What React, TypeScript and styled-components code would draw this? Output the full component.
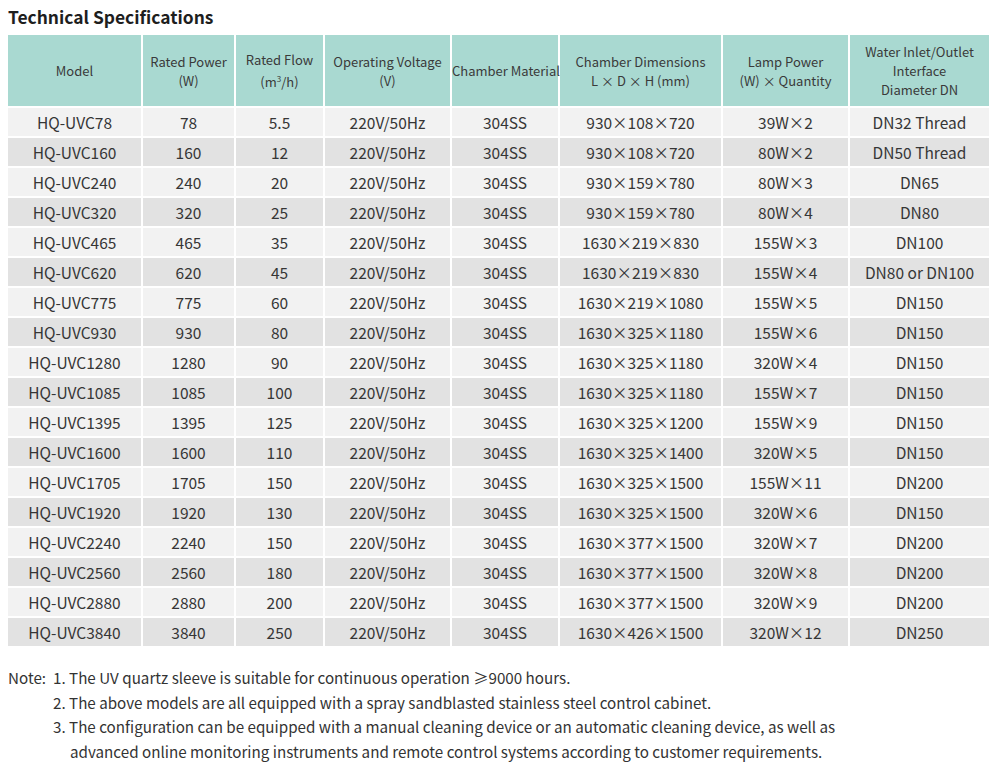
import React from "react";
import styled, { createGlobalStyle } from "styled-components";

const GlobalStyle = createGlobalStyle`
  html, body {
    margin: 0;
    padding: 0;
    background: #ffffff;
  }
  body {
    font-family: "Noto Sans CJK SC", "Noto Sans", sans-serif;
    color: #333333;
  }
`;

const Page = styled.div`
  width: 1000px;
  height: 777px;
  padding: 4px 8px 0 8px;
  box-sizing: border-box;
  overflow: hidden;
`;

const Title = styled.h2`
  margin: 0 0 6px 0;
  font-size: 17.4px;
  line-height: 25px;
  font-weight: 700;
  color: #1e1e1e;
`;

const Table = styled.table`
  width: 981px;
  border-collapse: collapse;
  table-layout: fixed;
  font-size: 15.5px;
  color: #363636;
`;

const HeadCell = styled.th`
  background: #a9d9d1;
  font-size: 13px;
  font-weight: 400;
  line-height: 19px;
  height: 71px;
  padding: 0;
  text-align: center;
  white-space: nowrap;
  border: 2px solid #ffffff;
  border-top: none;
  color: #3a3a3a;
  &:first-child {
    border-left: none;
  }
  &:last-child {
    border-right: none;
  }
`;

const Sup = styled.sup`
  font-size: 8px;
  vertical-align: 5px;
`;

const Row = styled.tr<{ $dark: boolean }>`
  background: ${({ $dark }) => ($dark ? "#e2e2e2" : "#f2f2f2")};
`;

const Cell = styled.td`
  height: 28px;
  padding: 0;
  line-height: 28px;
  text-align: center;
  white-space: nowrap;
  border: 2px solid #ffffff;
  &:first-child {
    border-left: none;
  }
  &:last-child {
    border-right: none;
  }
`;

const Notes = styled.div`
  margin-top: 17px;
  display: grid;
  grid-template-columns: 45px 1fr;
  font-size: 15.2px;
  line-height: 24.5px;
  color: #333333;
`;

const NoteLabel = styled.span`
  grid-row: 1 / span 3;
`;

const NoteItem = styled.p`
  margin: 0;
  padding-left: 17px;
  text-indent: -17px;
`;

const cols = [134, 93, 89, 127, 108, 163, 127, 140];

type Spec = [string, string, string, string, string, string];

const specs: Spec[] = [
  ["HQ-UVC78", "78", "5.5", "930×108×720", "39W×2", "DN32 Thread"],
  ["HQ-UVC160", "160", "12", "930×108×720", "80W×2", "DN50 Thread"],
  ["HQ-UVC240", "240", "20", "930×159×780", "80W×3", "DN65"],
  ["HQ-UVC320", "320", "25", "930×159×780", "80W×4", "DN80"],
  ["HQ-UVC465", "465", "35", "1630×219×830", "155W×3", "DN100"],
  ["HQ-UVC620", "620", "45", "1630×219×830", "155W×4", "DN80 or DN100"],
  ["HQ-UVC775", "775", "60", "1630×219×1080", "155W×5", "DN150"],
  ["HQ-UVC930", "930", "80", "1630×325×1180", "155W×6", "DN150"],
  ["HQ-UVC1280", "1280", "90", "1630×325×1180", "320W×4", "DN150"],
  ["HQ-UVC1085", "1085", "100", "1630×325×1180", "155W×7", "DN150"],
  ["HQ-UVC1395", "1395", "125", "1630×325×1200", "155W×9", "DN150"],
  ["HQ-UVC1600", "1600", "110", "1630×325×1400", "320W×5", "DN150"],
  ["HQ-UVC1705", "1705", "150", "1630×325×1500", "155W×11", "DN200"],
  ["HQ-UVC1920", "1920", "130", "1630×325×1500", "320W×6", "DN150"],
  ["HQ-UVC2240", "2240", "150", "1630×377×1500", "320W×7", "DN200"],
  ["HQ-UVC2560", "2560", "180", "1630×377×1500", "320W×8", "DN200"],
  ["HQ-UVC2880", "2880", "200", "1630×377×1500", "320W×9", "DN200"],
  ["HQ-UVC3840", "3840", "250", "1630×426×1500", "320W×12", "DN250"],
];

const App = () => {
  return (
    <>
      <GlobalStyle />
      <Page>
        <Title>Technical Specifications</Title>
        <Table>
          <colgroup>
            {cols.map((w, i) => (
              <col key={i} style={{ width: w }} />
            ))}
          </colgroup>
          <thead>
            <tr>
              <HeadCell>Model</HeadCell>
              <HeadCell>
                Rated Power
                <br />
                (W)
              </HeadCell>
              <HeadCell>
                Rated Flow
                <br />
                (m<Sup>3</Sup>/h)
              </HeadCell>
              <HeadCell>
                Operating Voltage
                <br />
                (V)
              </HeadCell>
              <HeadCell>Chamber Material</HeadCell>
              <HeadCell>
                Chamber Dimensions
                <br />L × D × H (mm)
              </HeadCell>
              <HeadCell>
                Lamp Power
                <br />
                (W) × Quantity
              </HeadCell>
              <HeadCell>
                Water Inlet/Outlet
                <br />
                Interface
                <br />
                Diameter DN
              </HeadCell>
            </tr>
          </thead>
          <tbody>
            {specs.map((s, i) => (
              <Row key={s[0]} $dark={i % 2 === 1}>
                <Cell>{s[0]}</Cell>
                <Cell>{s[1]}</Cell>
                <Cell>{s[2]}</Cell>
                <Cell>220V/50Hz</Cell>
                <Cell>304SS</Cell>
                <Cell>{s[3]}</Cell>
                <Cell>{s[4]}</Cell>
                <Cell>{s[5]}</Cell>
              </Row>
            ))}
          </tbody>
        </Table>
        <Notes>
          <NoteLabel>Note:</NoteLabel>
          <NoteItem>1. The UV quartz sleeve is suitable for continuous operation ≥9000 hours.</NoteItem>
          <NoteItem>2. The above models are all equipped with a spray sandblasted stainless steel control cabinet.</NoteItem>
          <NoteItem>
            3. The configuration can be equipped with a manual cleaning device or an automatic cleaning device, as well as
            <br />
            advanced online monitoring instruments and remote control systems according to customer requirements.
          </NoteItem>
        </Notes>
      </Page>
    </>
  );
};

export default App;
